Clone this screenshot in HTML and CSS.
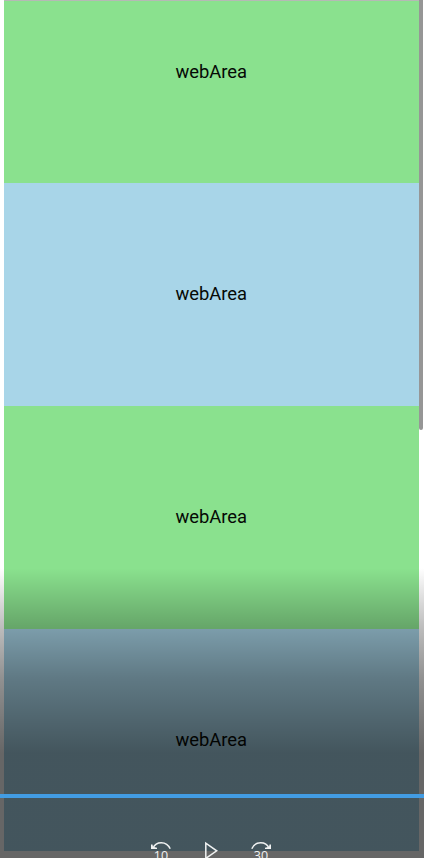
FILE: index.html
```html
<!DOCTYPE html>
<html lang="en">
<head>
<meta charset="utf-8">
<title>webArea</title>
<link rel="stylesheet" href="styles.css">
</head>
<body>
<main class="screen">
  <div class="list">
    <section class="area green first">webArea</section>
    <section class="area blue">webArea</section>
    <section class="area green">webArea</section>
    <section class="area blue last">webArea</section>
  </div>
  <div class="scrollbar"></div>
  <div class="player">
    <div class="progress"></div>
    <div class="controls">
      <svg class="icon" width="26" height="22" viewBox="0 0 26 22">
        <path class="line" d="M5 8.200C8 1 18.500 .5 22.200 8.800"/>
        <path class="head" d="M3 4.500l1.500 0 .5 2.300 4 .9v1.300H3z"/>
        <text x="13" y="20">10</text>
      </svg>
      <svg class="icon" width="16" height="22" viewBox="0 0 16 22">
        <path class="line" d="M2.800 3.200v15.200L13.700 10.800z"/>
      </svg>
      <svg class="icon" width="26" height="22" viewBox="0 0 26 22">
        <path class="line" d="M21 8.200C18 1 7.500 .5 3.800 8.800"/>
        <path class="head" d="M23 4.500l-1.500 0-.5 2.300-4 .9v1.300h6z"/>
        <text x="13" y="20">30</text>
      </svg>
    </div>
  </div>
</main>
</body>
</html>
```

FILE: styles.css
```css
body {
  margin: 0;
  background: #fff;
  font-family: Roboto, sans-serif;
}

.screen {
  position: relative;
  height: 858px;
  overflow: hidden;
}

.list {
  margin: 0 5.5px 0 4px;
}

.area {
  box-sizing: border-box;
  display: flex;
  align-items: center;
  justify-content: center;
  height: 223px;
  padding-bottom: 1.5px;
  font-size: 18.4px;
  color: #050905;
}

.first {
  height: 183px;
  padding-bottom: 42px;
  border-top: 1px solid #b5b9b5;
}

.last {
  height: 222px;
  padding-bottom: 1.5px;
}

.green {
  background: #8ae18e;
}

.blue {
  background: #a8d5e8;
}

.scrollbar {
  position: absolute;
  top: 0;
  right: 1.5px;
  width: 4px;
  height: 430px;
  border-radius: 0 0 2px 2px;
  background: #969696;
}

.player {
  position: absolute;
  inset: 568px 0 0;
  display: flex;
  flex-direction: column;
  background: linear-gradient(rgba(0, 0, 0, 0), rgba(0, 0, 0, .26) 59px, rgba(0, 0, 0, .43) 110px, rgba(0, 0, 0, .6) 185px);
}

.progress {
  height: 4px;
  margin-top: 226px;
  background: #429ce3;
}

.controls {
  display: flex;
  justify-content: center;
  gap: 29px;
  margin-top: 42px;
  padding-right: 2px;
  height: 18px;
  overflow: hidden;
}

.icon {
  flex: none;
}

.line {
  fill: none;
  stroke: #f0f2f2;
  stroke-width: 1.5;
}

.head {
  fill: #f0f2f2;
}

.icon text {
  fill: #f0f2f2;
  font: 12.5px "Open Sans", sans-serif;
  text-anchor: middle;
}
```
